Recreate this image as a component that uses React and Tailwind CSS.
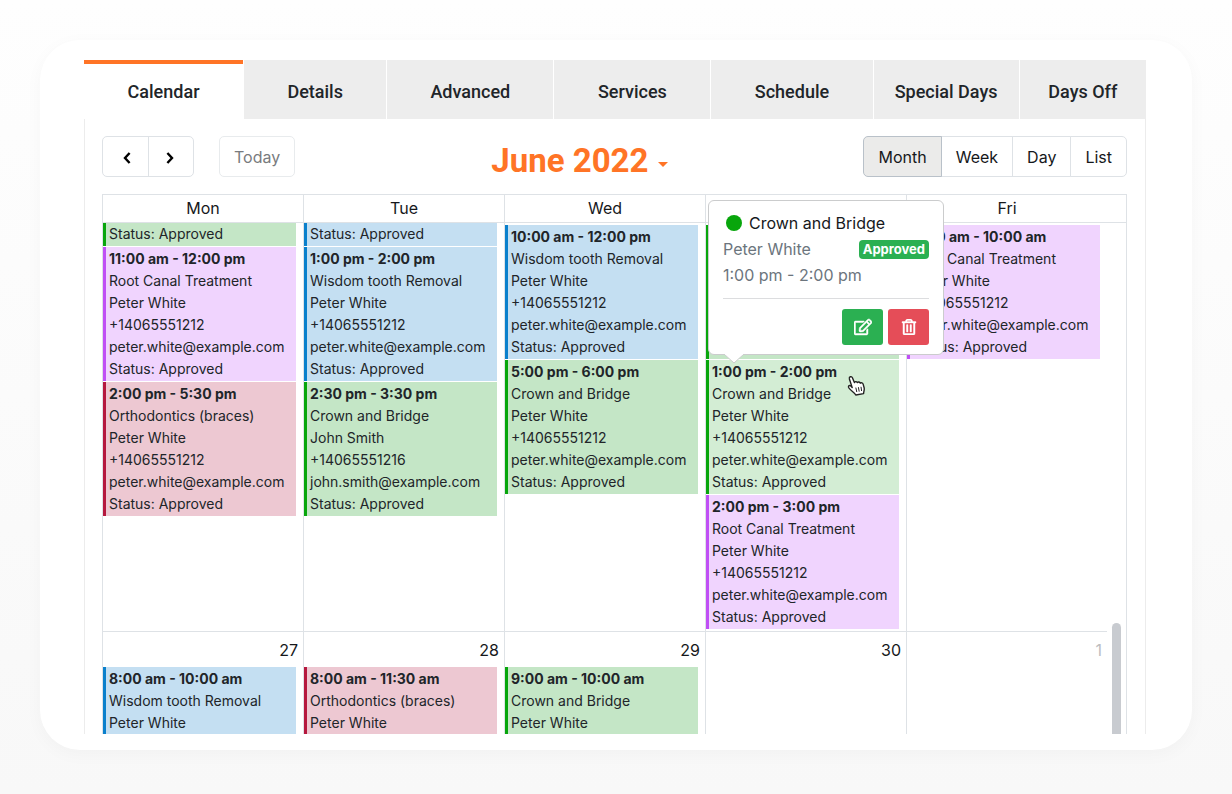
import React, { useState } from 'react';
import { FaRegEdit, FaRegTrashAlt } from 'react-icons/fa';
import clsx from 'clsx';

const tabs = [
  { name: 'Calendar', size: 'flex-[160_1_0]' },
  { name: 'Details', size: 'flex-[143_1_0]' },
  { name: 'Advanced', size: 'flex-[167_1_0]' },
  { name: 'Services', size: 'flex-[157_1_0]' },
  { name: 'Schedule', size: 'flex-[162_1_0]' },
  { name: 'Special Days', size: 'flex-[146_1_0]' },
  { name: 'Days Off', size: 'flex-[127_1_0]' },
];

const views = ['Month', 'Week', 'Day', 'List'];
const weekDays = ['Mon', 'Tue', 'Wed', 'Thu', 'Fri'];

const services = {
  crown: { title: 'Crown and Bridge', color: 'border-[#08a60c] bg-[#c4e6c6]' },
  wisdom: { title: 'Wisdom tooth Removal', color: 'border-[#0a80cc] bg-[#c4dff2]' },
  root: { title: 'Root Canal Treatment', color: 'border-[#c04ff5] bg-[#f0d4fe]' },
  braces: { title: 'Orthodontics (braces)', color: 'border-[#b5183e] bg-[#edc8d2]' },
};

const peter = { name: 'Peter White', phone: '+14065551212', email: 'peter.white@example.com' };
const john = { name: 'John Smith', phone: '+14065551216', email: 'john.smith@example.com' };

const weeks = [
  {
    days: [
      {
        events: [
          { service: 'crown', tail: true },
          { time: '11:00 am - 12:00 pm', service: 'root', client: peter },
          { time: '2:00 pm - 5:30 pm', service: 'braces', client: peter },
        ],
      },
      {
        events: [
          { service: 'wisdom', tail: true },
          { time: '1:00 pm - 2:00 pm', service: 'wisdom', client: peter },
          { time: '2:30 pm - 3:30 pm', service: 'crown', client: john },
        ],
      },
      {
        events: [
          { time: '10:00 am - 12:00 pm', service: 'wisdom', client: peter },
          { time: '5:00 pm - 6:00 pm', service: 'crown', client: peter },
        ],
      },
      {
        events: [
          { time: '9:00 am - 10:00 am', service: 'crown', client: peter },
          { time: '1:00 pm - 2:00 pm', service: 'crown', client: peter, active: true },
          { time: '2:00 pm - 3:00 pm', service: 'root', client: peter },
        ],
      },
      { events: [{ time: '9:00 am - 10:00 am', service: 'root', client: peter }] },
    ],
  },
  {
    days: [
      { date: 27, events: [{ time: '8:00 am - 10:00 am', service: 'wisdom', client: peter }] },
      { date: 28, events: [{ time: '8:00 am - 11:30 am', service: 'braces', client: peter }] },
      { date: 29, events: [{ time: '9:00 am - 10:00 am', service: 'crown', client: peter }] },
      { date: 30, events: [] },
      { date: 1, other: true, events: [] },
    ],
  },
];

const EventCard = ({ event }) => {
  const service = services[event.service];

  // Only the last line is left of an event that is scrolled out
  if (event.tail) {
    return (
      <div className={clsx('border-l-[3px] pl-[3px] pb-px', service.color)}>
        <p>Status: Approved</p>
      </div>
    );
  }

  return (
    <div
      className={clsx(
        'border-l-[3px] pl-[3px] py-px',
        event.active ? 'border-[#08a60c] bg-[#d3edd4]' : service.color
      )}
    >
      <p className="font-bold">{event.time}</p>
      <p>{service.title}</p>
      <p>{event.client.name}</p>
      <p>{event.client.phone}</p>
      <p>{event.client.email}</p>
      <p>Status: Approved</p>
    </div>
  );
};

const DayCell = ({ day }) => {
  const hasTail = day.events.some((e) => e.tail);

  return (
    <td className="border-l border-b border-[#dee2e6] p-0 align-top">
      {day.date && (
        <div
          className={clsx(
            'h-[35px] pr-[5px] text-right text-base leading-9',
            day.other ? 'text-[#bcbdbf]' : 'text-[#16181b]'
          )}
        >
          {day.date}
        </div>
      )}
      <div
        className={clsx(
          'mr-[7px] flex flex-col gap-px text-sm leading-[22px]',
          !day.date && !hasTail && 'pt-0.5'
        )}
      >
        {day.events.map((event, i) => (
          <EventCard key={i} event={event} />
        ))}
      </div>
    </td>
  );
};

const EventPopover = () => (
  <div className="absolute top-[6px] left-[606px] z-10 w-[236px] rounded-md border border-[#cbcccd] bg-white px-[14px] py-[9px]">
    <div className="flex items-center gap-[7px] pl-[3px] text-base leading-[26px] text-[#16181b]">
      <span className="h-4 w-4 rounded-full bg-[#08a60c]" />
      Crown and Bridge
    </div>
    <div className="flex items-center justify-between text-base leading-[26px] text-[#6c757d]">
      Peter White
      <span className="rounded-[4px] bg-[#2bb052] px-1 text-[13px] leading-[19px] font-bold text-white">
        Approved
      </span>
    </div>
    <div className="text-base leading-[26px] text-[#6c757d]">1:00 pm - 2:00 pm</div>
    <div className="my-2.5 border-t border-[#dcdddf]" />
    <div className="flex justify-end gap-[5px]">
      <button aria-label="Edit" className="flex h-9 w-[41px] items-center justify-center rounded-[3px] bg-[#2bb052] text-white">
        <FaRegEdit className="h-[18px] w-[18px]" stroke="currentColor" strokeWidth="14" />
      </button>
      <button aria-label="Delete" className="flex h-9 w-[41px] items-center justify-center rounded-[3px] bg-[#e54d58] text-white">
        <FaRegTrashAlt className="h-4 w-4" stroke="currentColor" strokeWidth="14" />
      </button>
    </div>
    <svg className="absolute top-full left-[15px]" width="20" height="10" viewBox="0 0 20 10">
      <path d="M0 0 L10 9 L20 0" fill="#fff" stroke="#cbcccd" />
      <path d="M1 0 H19" stroke="#fff" strokeWidth="1" />
    </svg>
  </div>
);

const HandCursor = () => (
  <svg className="absolute top-[181px] left-[745px] z-10" width="19" height="22" viewBox="0 0 19 22">
    <path
      d="M5.2 12.6 L2.4 4 C1.8 1.6 4.6 .8 5.4 2.8 L7.4 7.6 C8 6.3 9.6 6.4 10.4 7.6 C11 6.6 12.8 6.8 13.3 8.2 C14.2 7.4 15.8 7.9 16.2 9.4 L17.2 13 C17.6 15.3 16.6 16.2 16.6 18.6 L8.8 20 C8 18 4.8 16.4 2.2 13.4 C.4 11.4 2.2 9.8 3.6 10.8 Z"
      fill="#fff"
      stroke="#222"
      strokeWidth="1.4"
      strokeLinejoin="round"
    />
    <path d="M8.8 12.6 L9.8 17 M11.4 12.2 L12.2 16.6 M14 11.8 L14.6 16" stroke="#222" />
  </svg>
);

const Chevron = ({ d }) => (
  <svg width="8" height="12" viewBox="0 0 8 12" fill="none" stroke="#000" strokeWidth="2.4">
    <path d={d} />
  </svg>
);

const App = () => {
  const [tab, setTab] = useState('Calendar');
  const [view, setView] = useState('Month');

  return (
    <div className="flex h-screen flex-col bg-linear-to-b from-[#fefefe] to-[#f8f8f8] px-10 pt-10 pb-11 font-['Inter',sans-serif] text-[#212529]">
      <main className="flex min-h-0 flex-1 flex-col rounded-[40px] bg-white pt-5 pr-[46px] pb-4 pl-11 shadow-[0_4px_18px_rgba(0,0,0,0.03)]">
        <nav className="flex h-[59px] gap-px font-['Roboto',sans-serif]">
          {tabs.map((t) => (
            <button
              key={t.name}
              onClick={() => setTab(t.name)}
              className={clsx(
                'border-t-4 text-lg font-medium whitespace-nowrap',
                t.size,
                tab === t.name ? 'border-[#ff7426] bg-white' : 'border-[#ededed] bg-[#ededed]'
              )}
            >
              {t.name}
            </button>
          ))}
        </nav>

        <div className="flex min-h-0 flex-1 flex-col border-x border-[#ececec] pt-[17px] pr-[18px] pl-[17px]">
          <div className="flex items-start justify-between">
            <div className="flex gap-[25px]">
              <div className="flex h-[41px] divide-x divide-[#dee2e6] rounded-[5px] border border-[#dee2e6]">
                <button aria-label="Previous" className="flex w-[46px] items-center justify-center pt-0.5 pl-0.5">
                  <Chevron d="M6.6 1 L2 6 L6.6 11" />
                </button>
                <button aria-label="Next" className="flex w-[44px] items-center justify-center pt-0.5 pr-0.5">
                  <Chevron d="M1.4 1 L6 6 L1.4 11" />
                </button>
              </div>
              <button className="h-[41px] rounded-[5px] border border-[#e8ebed] px-[14px] text-base text-[#797b7e]">
                Today
              </button>
            </div>

            <button className="flex items-center gap-2.5 pt-[9px] font-['Roboto',sans-serif] text-[33px] leading-8 font-bold text-[#ff7426]">
              June 2022
              <svg className="mt-1.5" width="10" height="5" viewBox="0 0 10 5">
                <path d="M0 0 H10 L5 5 Z" fill="currentColor" />
              </svg>
            </button>

            <div className="flex h-[41px] text-base text-[#16181b]">
              {views.map((v) => (
                <button
                  key={v}
                  onClick={() => setView(v)}
                  className={clsx(
                    '-ml-px border px-[14px] first:rounded-l-[5px] last:rounded-r-[5px]',
                    view === v ? 'z-10 border-[#b9c1c9] bg-[#ebebea]' : 'border-[#dee2e6] bg-white'
                  )}
                >
                  {v}
                </button>
              ))}
            </div>
          </div>

          <div className="relative mt-[17px] flex min-h-0 flex-1 flex-col">
            <div className="min-h-0 flex-1 overflow-hidden">
              <table className="w-full table-fixed border-separate border-spacing-0">
                <thead>
                  <tr className="h-[29px]">
                    {weekDays.map((d) => (
                      <th
                        key={d}
                        className="border-y border-l border-[#dee2e6] p-0 text-base leading-[27px] font-normal text-[#16181b]"
                      >
                        {d}
                      </th>
                    ))}
                    <th className="w-5 border-y border-r border-[#dee2e6] p-0" />
                  </tr>
                </thead>
                <tbody>
                  {weeks.map((week, i) => (
                    <tr key={i} className="h-[409px]">
                      {week.days.map((day, j) => (
                        <DayCell key={j} day={day} />
                      ))}
                      <td className="border-r border-[#dee2e6] p-0" />
                    </tr>
                  ))}
                </tbody>
              </table>
            </div>
            <div className="absolute right-[6px] bottom-0 h-[111px] w-[9px] rounded-t-full bg-[#c8cbd0]" />
            <EventPopover />
            <HandCursor />
          </div>
        </div>
      </main>
    </div>
  );
};

export default App;
